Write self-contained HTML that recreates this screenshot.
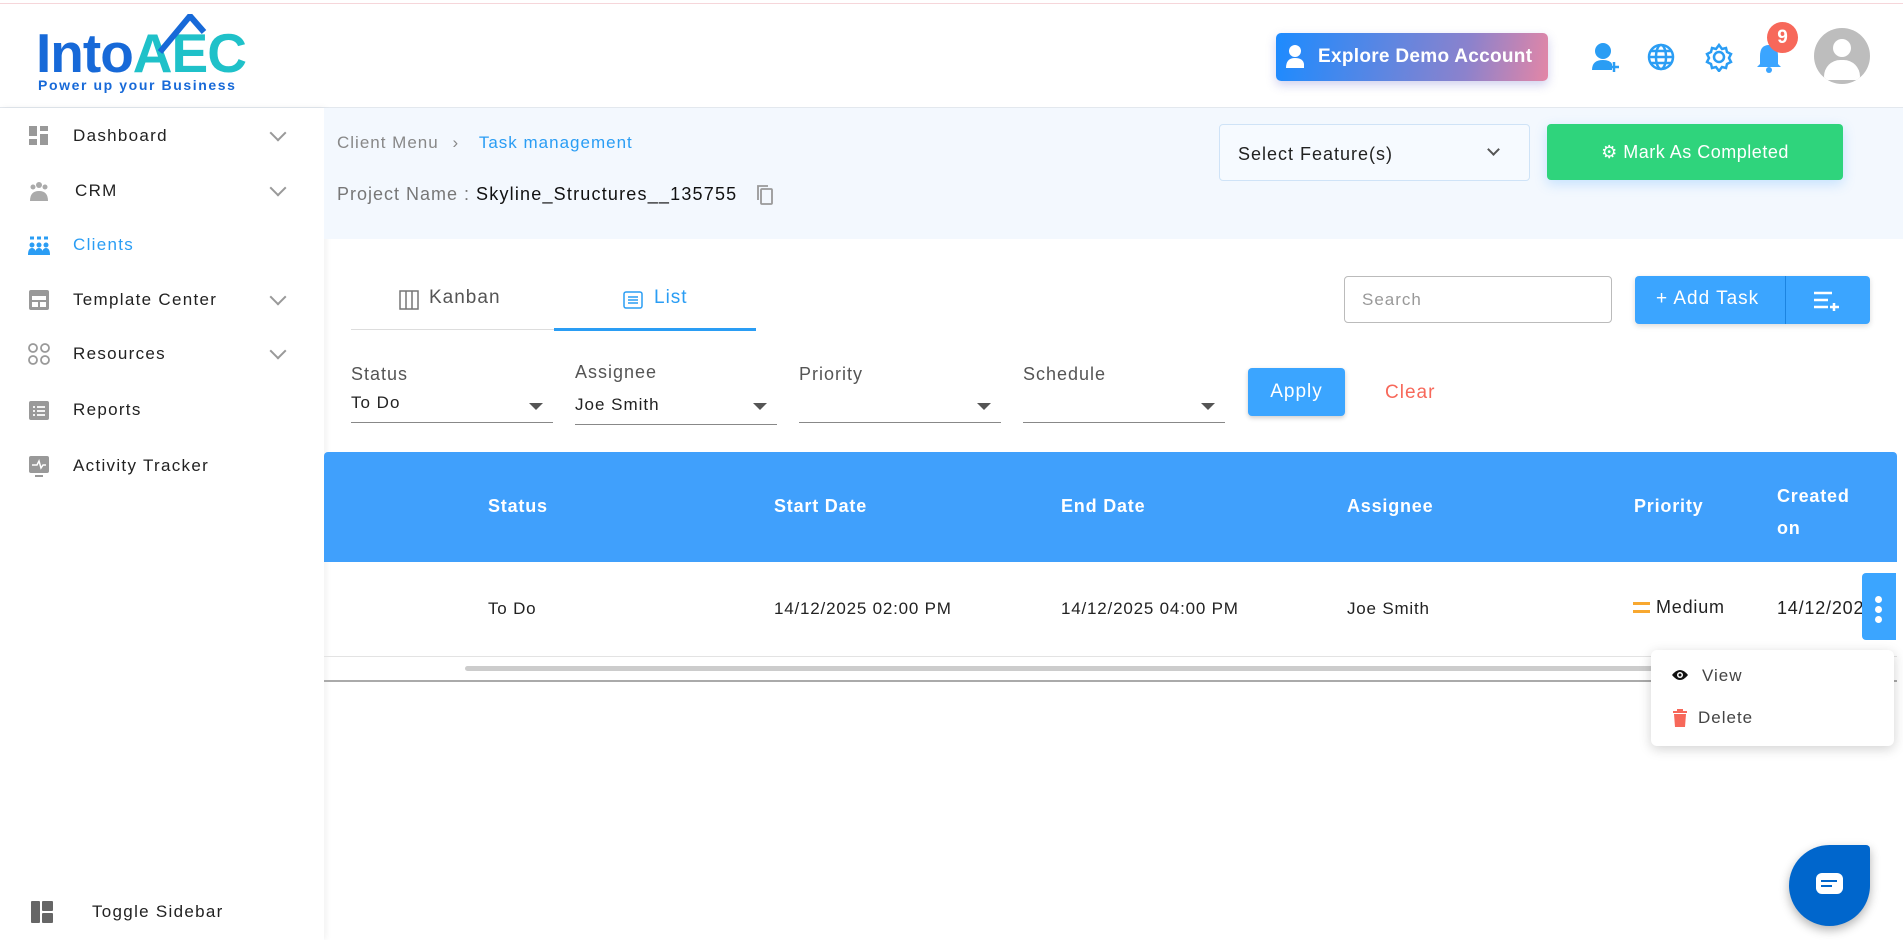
<!DOCTYPE html>
<html><head><meta charset="utf-8"><style>
*{box-sizing:border-box;margin:0;padding:0}
body{width:1903px;height:940px;overflow:hidden;font-family:"Liberation Sans",sans-serif;background:#fff;position:relative;color:#222;letter-spacing:1px}
.a{position:absolute}
.side{left:0;top:108px;width:324px;height:832px;background:#fff;box-shadow:2px 0 6px rgba(0,0,0,.06)}
.it{position:absolute;left:0;width:324px;height:40px;display:flex;align-items:center;font-size:17px;color:#222;letter-spacing:1.3px}
.it .ic{position:absolute;left:27px;width:24px;height:24px}
.it span{position:absolute;left:73px}
.chev{position:absolute;left:272px;width:12px;height:12px;border-right:2px solid #999;border-bottom:2px solid #999;transform:rotate(45deg);margin-top:-6px}
.th{color:#fff;font-weight:bold;font-size:18px;letter-spacing:.8px}
.td{font-size:17px;color:#222;letter-spacing:.8px}
.fl{font-size:18px;color:#555}
.fv{font-size:17px;color:#222}
.ul{height:1px;background:#888}
.tri{width:0;height:0;border-left:7px solid transparent;border-right:7px solid transparent;border-top:7px solid #555}
</style></head><body>
<div class="a" style="left:0;top:3px;width:1903px;height:1px;background:#f6d6da"></div>
<!-- logo -->
<div class="a" style="left:36px;top:23px;font-size:55px;font-weight:bold;color:#1769d8;letter-spacing:-1px;line-height:60px">Into<span style="color:#1fc1c9">AEC</span></div>
<svg class="a" style="left:152px;top:14px" width="80" height="40"><path d="M8 38 L38 2 L52 18" stroke="#1769d8" stroke-width="6" fill="none"/></svg>
<div class="a" style="left:38px;top:77px;font-size:14px;color:#1769d8;font-weight:bold;letter-spacing:1.6px">Power up your Business</div>
<!-- header right -->
<div class="a" style="left:1276px;top:33px;width:272px;height:48px;border-radius:5px;background:linear-gradient(100deg,#1c8bff,#8c82cc 70%,#e386a6);box-shadow:0 4px 10px rgba(100,100,200,.3);color:#fff;font-weight:bold;font-size:19px;display:flex;align-items:center;padding-left:42px;letter-spacing:.3px">Explore Demo Account</div>
<svg class="a" style="left:1285px;top:44px" width="24" height="26"><circle cx="10" cy="7" r="6" fill="#fff"/><path d="M1 24 Q1 14 10 14 Q18 14 19 20 L19 24Z" fill="#fff"/></svg>
<svg class="a" style="left:1592px;top:42px" width="28" height="32"><circle cx="11" cy="9" r="8" fill="#2a9df4"/><path d="M0 28 Q0 18 11 18 Q18 18 20 22 L20 28Z" fill="#2a9df4"/><path d="M22 20v10M17 25h10" stroke="#2a9df4" stroke-width="2.5"/></svg>
<svg class="a" style="left:1646px;top:42px" width="30" height="30" fill="none" stroke="#2a9df4" stroke-width="2.5"><circle cx="15" cy="15" r="12"/><ellipse cx="15" cy="15" rx="5" ry="12"/><path d="M3 15h24M5 9h20M5 21h20"/></svg>
<svg class="a" style="left:1704px;top:42px" width="30" height="30" fill="none" stroke="#2a9df4" stroke-width="2.5"><circle cx="15" cy="15" r="5"/><path d="M15 3l3 4 4-1 1 4 4 2-2 4 2 4-4 2-1 4-4-1-3 4-3-4-4 1-1-4-4-2 2-4-2-4 4-2 1-4 4 1z"/></svg>
<svg class="a" style="left:1756px;top:42px" width="26" height="32"><path d="M13 3 Q4 3 4 14 L4 22 L1 25 L25 25 L22 22 L22 14 Q22 3 13 3Z" fill="#3ba5ff"/><circle cx="13" cy="28" r="3" fill="#3ba5ff"/></svg>
<div class="a" style="left:1767px;top:22px;width:31px;height:31px;border-radius:50%;background:#f7685a;color:#fff;font-size:19px;font-weight:bold;text-align:center;line-height:31px;letter-spacing:0">9</div>
<div class="a" style="left:1814px;top:28px;width:56px;height:56px;border-radius:50%;background:#bdbdbd;overflow:hidden"><div class="a" style="left:19px;top:11px;width:18px;height:18px;border-radius:50%;background:#fff"></div><div class="a" style="left:10px;top:32px;width:36px;height:20px;border-radius:18px 18px 4px 4px;background:#fff"></div></div>
<div class="a" style="left:0;top:107px;width:1903px;height:1px;background:#e3e8ee"></div>
<!-- sidebar -->
<div class="a side">
<div class="it" style="top:8px"><svg class="ic" viewBox="0 0 24 24" fill="#999"><rect x="2" y="2" width="8" height="10"/><rect x="13" y="2" width="8" height="5"/><rect x="2" y="15" width="8" height="6"/><rect x="13" y="10" width="8" height="11"/></svg><span>Dashboard</span><i class="chev"></i></div>
<div class="it" style="top:63px"><svg class="ic" viewBox="0 0 24 24" fill="#aaa"><circle cx="12" cy="6" r="3"/><circle cx="6" cy="8" r="2.5"/><circle cx="18" cy="8" r="2.5"/><path d="M3 22 Q3 12 12 12 Q21 12 21 22Z"/></svg><span style="left:75px">CRM</span><i class="chev"></i></div>
<div class="it" style="top:117px;color:#2a9df4"><svg class="ic" viewBox="0 0 24 24" fill="#2a9df4"><circle cx="5" cy="12" r="2.5"/><circle cx="12" cy="12" r="2.5"/><circle cx="19" cy="12" r="2.5"/><path d="M1 22 Q1 15 5 15 Q9 15 9 22Z M8 22 Q8 15 12 15 Q16 15 16 22Z M15 22 Q15 15 19 15 Q23 15 23 22Z"/><path d="M3 5h4M10 5h4M17 5h4" stroke="#2a9df4" stroke-width="3"/></svg><span>Clients</span></div>
<div class="it" style="top:172px"><svg class="ic" viewBox="0 0 24 24" fill="#999"><rect x="2" y="2" width="20" height="20" rx="2"/><rect x="5" y="8" width="14" height="4" fill="#fff"/><rect x="5" y="14" width="6" height="5" fill="#fff"/><rect x="13" y="14" width="6" height="5" fill="#fff"/></svg><span>Template Center</span><i class="chev"></i></div>
<div class="it" style="top:226px"><svg class="ic" viewBox="0 0 24 24" fill="none" stroke="#999" stroke-width="1.8"><circle cx="6" cy="6" r="4"/><circle cx="18" cy="6" r="4"/><circle cx="6" cy="18" r="4"/><circle cx="18" cy="18" r="4"/></svg><span>Resources</span><i class="chev"></i></div>
<div class="it" style="top:282px"><svg class="ic" viewBox="0 0 24 24" fill="#999"><rect x="2" y="3" width="20" height="19" rx="2"/><path d="M6 9h2M10 9h8M6 13h2M10 13h8M6 17h2M10 17h8" stroke="#fff" stroke-width="1.8"/></svg><span>Reports</span></div>
<div class="it" style="top:338px"><svg class="ic" viewBox="0 0 24 24" fill="#999"><rect x="2" y="2" width="20" height="17" rx="2"/><path d="M5 11h5l2-4 2 7 2-3h3" stroke="#fff" stroke-width="1.5" fill="none"/><rect x="8" y="21" width="8" height="2"/></svg><span>Activity Tracker</span></div>
<div class="it" style="top:784px"><svg class="ic" style="left:30px" viewBox="0 0 24 24" fill="#666"><rect x="1" y="1" width="9" height="22" rx="1"/><rect x="12" y="1" width="11" height="10" rx="1"/><rect x="12" y="13" width="11" height="10" rx="1"/></svg><span style="left:92px">Toggle Sidebar</span></div>
</div>
<!-- breadcrumb band -->
<div class="a" style="left:324px;top:108px;width:1579px;height:131px;background:#f3f8fe"></div>
<div class="a" style="left:337px;top:133px;font-size:17px;color:#888">Client Menu <span style="color:#888;margin:0 8px">›</span> <span style="color:#2a9df4;margin-left:6px">Task management</span></div>
<div class="a" style="left:337px;top:184px;font-size:18px;color:#777;letter-spacing:1px">Project Name : <span style="color:#111;letter-spacing:1.2px">Skyline_Structures__135755</span></div>
<svg class="a" style="left:756px;top:184px" width="18" height="22" fill="none" stroke="#999" stroke-width="1.8"><rect x="5" y="5" width="11" height="15" rx="1"/><path d="M2 16V2h10"/></svg>
<div class="a" style="left:1219px;top:124px;width:311px;height:57px;border:1px solid #cfe3f7;border-radius:4px;background:#f6faff;font-size:18px;color:#222;padding:19px 0 0 18px">Select Feature(s)</div>
<div class="a" style="left:1489px;top:145px;width:9px;height:9px;border-right:2px solid #555;border-bottom:2px solid #555;transform:rotate(45deg)"></div>
<div class="a" style="left:1547px;top:124px;width:296px;height:56px;background:#2fd47c;border-radius:4px;box-shadow:0 4px 12px rgba(60,160,255,.25);color:#fff;font-size:18px;display:flex;align-items:center;justify-content:center;letter-spacing:.5px">&#9881;&nbsp;Mark As Completed</div>
<!-- tabs -->
<div class="a" style="left:351px;top:329px;width:405px;height:1px;background:#ddd"></div>
<div class="a" style="left:554px;top:328px;width:202px;height:3px;background:#2a9df4"></div>
<svg class="a" style="left:399px;top:290px" width="20" height="20" fill="none" stroke="#777" stroke-width="1.5"><rect x="1" y="1" width="18" height="18"/><path d="M7 1v18M13 1v18"/></svg>
<div class="a" style="left:429px;top:287px;font-size:19px;color:#555">Kanban</div>
<svg class="a" style="left:623px;top:290px" width="20" height="20" fill="none" stroke="#2a9df4" stroke-width="1.5"><rect x="1" y="2" width="18" height="16" rx="2"/><path d="M5 7h10M5 10h10M5 13h10"/></svg>
<div class="a" style="left:654px;top:287px;font-size:19px;color:#2a9df4">List</div>
<div class="a" style="left:1344px;top:276px;width:268px;height:47px;border:1px solid #bbb;border-radius:4px;font-size:17px;color:#999;padding:13px 0 0 17px">Search</div>
<div class="a" style="left:1635px;top:276px;width:235px;height:48px;background:#3ba5ff;border-radius:4px;box-shadow:0 2px 6px rgba(0,0,0,.15)"></div>
<div class="a" style="left:1785px;top:276px;width:1px;height:48px;background:#1c84e0"></div>
<div class="a" style="left:1656px;top:288px;font-size:19px;color:#fff">+ Add Task</div>
<svg class="a" style="left:1812px;top:289px" width="30" height="22" stroke="#fff" stroke-width="2.5"><path d="M2 4h18M2 11h14M2 18h14M22 14v8M18 18h9"/></svg>
<!-- filters -->
<div class="a fl" style="left:351px;top:364px">Status</div><div class="a fv" style="left:351px;top:393px">To Do</div><div class="a ul" style="left:351px;top:422px;width:202px"></div><div class="a tri" style="left:529px;top:403px"></div>
<div class="a fl" style="left:575px;top:362px">Assignee</div><div class="a fv" style="left:575px;top:395px">Joe Smith</div><div class="a ul" style="left:575px;top:424px;width:202px"></div><div class="a tri" style="left:753px;top:403px"></div>
<div class="a fl" style="left:799px;top:364px">Priority</div><div class="a ul" style="left:799px;top:422px;width:202px"></div><div class="a tri" style="left:977px;top:403px"></div>
<div class="a fl" style="left:1023px;top:364px">Schedule</div><div class="a ul" style="left:1023px;top:422px;width:202px"></div><div class="a tri" style="left:1201px;top:403px"></div>
<div class="a" style="left:1248px;top:368px;width:97px;height:48px;background:#3ba5ff;border-radius:4px;box-shadow:0 2px 5px rgba(0,0,0,.2);color:#fff;font-size:19px;text-align:center;line-height:48px">Apply</div>
<div class="a" style="left:1385px;top:382px;font-size:19px;color:#f7685a">Clear</div>
<!-- table -->
<div class="a" style="left:324px;top:452px;width:1573px;height:110px;background:#40a0fc;border-radius:4px 4px 0 0"></div>
<div class="a th" style="left:488px;top:496px">Status</div>
<div class="a th" style="left:774px;top:496px">Start Date</div>
<div class="a th" style="left:1061px;top:496px">End Date</div>
<div class="a th" style="left:1347px;top:496px">Assignee</div>
<div class="a th" style="left:1634px;top:496px">Priority</div>
<div class="a th" style="left:1777px;top:480px;line-height:32px">Created<br>on</div>
<div class="a td" style="left:488px;top:599px">To Do</div>
<div class="a td" style="left:774px;top:599px">14/12/2025 02:00 PM</div>
<div class="a td" style="left:1061px;top:599px">14/12/2025 04:00 PM</div>
<div class="a td" style="left:1347px;top:599px">Joe Smith</div>
<div class="a" style="left:1633px;top:602px;width:17px;height:3px;background:#f8a830"></div><div class="a" style="left:1633px;top:610px;width:17px;height:3px;background:#f8a830"></div>
<div class="a td" style="left:1656px;top:597px;font-size:18px">Medium</div>
<div class="a td" style="left:1777px;top:598px;font-size:18px;width:85px;overflow:hidden;white-space:nowrap">14/12/2025</div>
<div class="a" style="left:1862px;top:573px;width:34px;height:67px;background:#3ba5ff;border-radius:4px 0 0 4px"></div>
<div class="a" style="left:1875px;top:596px;width:7px;height:7px;border-radius:50%;background:#fff;box-shadow:0 10px 0 #fff,0 20px 0 #fff"></div>
<div class="a" style="left:324px;top:656px;width:1573px;height:1px;background:#e3e3e3"></div>
<div class="a" style="left:465px;top:666px;width:1400px;height:5px;background:#ccc;border-radius:3px"></div>
<div class="a" style="left:324px;top:680px;width:1573px;height:2px;background:#aaa"></div>
<!-- menu -->
<div class="a" style="left:1651px;top:650px;width:243px;height:96px;background:#fff;border-radius:6px;box-shadow:0 3px 12px rgba(0,0,0,.18)"></div>
<svg class="a" style="left:1671px;top:668px" width="18" height="14"><path d="M1 7 Q9 -3 17 7 Q9 17 1 7Z" fill="#111"/><circle cx="9" cy="7" r="3" fill="#fff"/><circle cx="9" cy="7" r="1.5" fill="#111"/></svg>
<div class="a" style="left:1702px;top:666px;font-size:17px;color:#444">View</div>
<svg class="a" style="left:1673px;top:709px" width="14" height="18" fill="#f7685a"><rect x="0" y="2" width="14" height="2"/><rect x="4" y="0" width="6" height="2"/><path d="M1 5h12l-1 13H2z"/></svg>
<div class="a" style="left:1698px;top:708px;font-size:17px;color:#444">Delete</div>
<!-- chat -->
<div class="a" style="left:1789px;top:845px;width:81px;height:81px;background:#0066cc;border-radius:50% 4px 50% 50%;box-shadow:0 4px 10px rgba(0,0,0,.3)"></div>
<div class="a" style="left:1816px;top:873px;width:27px;height:21px;background:#fff;border-radius:6px"></div>
<div class="a" style="left:1821px;top:880px;width:16px;height:2px;background:#0066cc"></div>
<div class="a" style="left:1821px;top:885px;width:11px;height:2px;background:#0066cc"></div>
</body></html>
